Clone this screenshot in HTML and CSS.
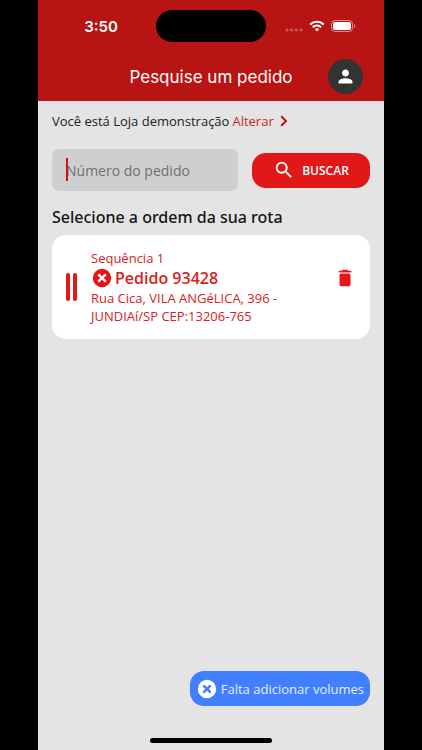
FILE: index.html
```html
<!DOCTYPE html>
<html lang="pt-BR">
<head>
  <meta charset="UTF-8" />
  <meta name="viewport" content="width=device-width, initial-scale=1.0"/>
  <title>Pesquise um pedido</title>
  <link rel="stylesheet" href="styles.css">
</head>
<body>

  <div class="phone">
    <header class="top">
      <!-- Status bar -->
      <div class="status-bar">
        <span class="time">3:50</span>
        <span class="island"></span>
        <div class="signals">
          <svg width="18" height="4" viewBox="0 0 18 4" fill="#fff" fill-opacity=".3">
            <circle cx="2" cy="2" r="1.6"/><circle cx="6.6" cy="2" r="1.6"/><circle cx="11.3" cy="2" r="1.6"/><circle cx="16" cy="2" r="1.6"/>
          </svg>
          <svg width="16" height="12" viewBox="0 0 16 12" fill="none" stroke="#fff" stroke-width="2.2">
            <path d="M1.2 4.5a9.8 9.8 0 0 1 13.6 0"/>
            <path d="M3.8 7.2a6 6 0 0 1 8.4 0"/>
            <path d="M8 11.6L5.8 9.3a3.2 3.2 0 0 1 4.4 0z" fill="#fff" stroke="none"/>
          </svg>
          <svg width="25" height="12" viewBox="0 0 25 12">
            <rect x=".5" y=".5" width="21" height="11" rx="3.5" fill="none" stroke="#fff" stroke-opacity=".5"/>
            <rect x="2" y="2" width="18" height="8" rx="2.2" fill="#fff"/>
            <path d="M23 4v4a2.2 2.2 0 0 0 0-4z" fill="#fff" fill-opacity=".5"/>
          </svg>
        </div>
      </div>

      <div class="title-bar">
        <h1>Pesquise um pedido</h1>
        <button class="avatar" type="button" aria-label="Perfil">
          <svg width="21" height="21" viewBox="0 0 24 24" fill="#fff"><path d="M12 12c2.2 0 4-1.8 4-4s-1.8-4-4-4-4 1.8-4 4 1.8 4 4 4zm0 2c-2.7 0-8 1.3-8 4v1c0 .6.4 1 1 1h14c.6 0 1-.4 1-1v-1c0-2.7-5.3-4-8-4z"/></svg>
        </button>
      </div>
    </header>

    <main class="content">
      <p class="store">
        Você está Loja demonstração
        <a href="#">Alterar
          <svg width="8" height="12" viewBox="0 0 8 12" fill="none" stroke="#b91515" stroke-width="2"><path d="M1.2 1.2L6 6l-4.8 4.8"/></svg>
        </a>
      </p>

      <form class="search">
        <div class="field">
          <input type="text" placeholder="Número do pedido" aria-label="Número do pedido">
          <span class="caret"></span>
        </div>
        <button class="search-btn" type="button">
          <svg width="22" height="22" viewBox="0 0 24 24" fill="#fff"><path d="M15.5 14h-.79l-.28-.27A6.47 6.47 0 0 0 16 9.5 6.5 6.5 0 1 0 9.5 16c1.61 0 3.09-.59 4.23-1.57l.27.28v.79l5 4.99L20.49 19l-4.99-5zm-6 0C7.01 14 5 11.99 5 9.5S7.01 5 9.5 5 14 7.01 14 9.5 11.99 14 9.5 14z"/></svg>
          BUSCAR
        </button>
      </form>

      <h2>Selecione a ordem da sua rota</h2>

      <article class="card">
        <div class="handle"><span></span><span></span></div>
        <div class="order">
          <p>Sequência 1</p>
          <h3>
            <svg width="22" height="22" viewBox="0 0 24 24"><circle cx="12" cy="12" r="10" fill="#e21717"/><path d="M8 8l8 8M16 8l-8 8" stroke="#fff" stroke-width="2.6"/></svg>
            Pedido 93428
          </h3>
          <p>Rua Cica, VILA ANGéLICA, 396 - JUNDIAí/SP CEP:13206-765</p>
        </div>
        <button class="delete" type="button" aria-label="Excluir pedido">
          <svg width="22" height="22" viewBox="0 0 24 24" fill="#e21717"><path d="M6 19c0 1.1.9 2 2 2h8c1.1 0 2-.9 2-2V9c0-1.1-.9-2-2-2H8c-1.1 0-2 .9-2 2v10zM18 4h-2.5l-.71-.71c-.18-.18-.44-.29-.7-.29H9.910c-.26 0-.52.11-.7.29L8.500 4H6c-.55 0-1 .45-1 1s.45 1 1 1h12c.55 0 1-.45 1-1s-.45-1-1-1z"/></svg>
        </button>
      </article>
    </main>

    <footer class="bottom">
      <button class="volumes-btn" type="button">
        <svg width="22" height="22" viewBox="0 0 24 24"><circle cx="12" cy="12" r="10" fill="#fff"/><path d="M8 8l8 8M16 8l-8 8" stroke="#4080ff" stroke-width="2.6"/></svg>
        Falta adicionar volumes
      </button>
      <span class="home-bar"></span>
    </footer>
  </div>

</body>
</html>
```

FILE: styles.css
```css
* {
  box-sizing: border-box;
}

body {
  margin: 0;
  padding: 0 38px;
  background: #000;
  font-family: 'Open Sans', 'Noto Sans', sans-serif;
  color: #222;
}

h1, h2, h3, p {
  margin: 0;
}

button {
  border: none;
  padding: 0;
  font-family: inherit;
  cursor: pointer;
}

svg {
  display: block;
  flex-shrink: 0;
}

.phone {
  min-height: 100vh;
  display: flex;
  flex-direction: column;
  background: #e4e4e4;
}

.top {
  background: #b91414;
  color: #fff;
}

/* Status bar */
.status-bar {
  display: grid;
  grid-template-columns: 1fr 110px 1fr;
  align-items: center;
  height: 52px;
}

.time {
  padding-left: 8px;
  text-align: center;
  font: 600 15px 'Inter', sans-serif;
}

.island {
  height: 32px;
  border-radius: 16px;
  background: #000;
}

.signals {
  display: flex;
  align-items: center;
  justify-content: flex-end;
  gap: 6px;
  padding-right: 28px;
}

.signals svg:first-child {
  margin-top: 8px;
}

/* Title */
.title-bar {
  display: grid;
  grid-template-columns: 1fr auto 1fr;
  align-items: center;
  padding: 7px 21px;
}

.title-bar h1 {
  grid-column: 2;
  font: 400 17px 'Inter', sans-serif;
}

.avatar {
  display: flex;
  align-items: center;
  justify-content: center;
  justify-self: end;
  width: 35px;
  height: 35px;
  border-radius: 50%;
  background: #333;
}

.content {
  flex: 1;
  padding: 10px 14px;
}

.store {
  display: flex;
  gap: 3px;
  font-size: 13px;
  line-height: 20px;
}

.store a {
  display: flex;
  align-items: center;
  gap: 6px;
  color: #c91f1f;
  text-decoration: none;
}

/* Search */
.search {
  display: flex;
  align-items: center;
  gap: 14px;
  margin-top: 18px;
}

.field {
  position: relative;
  flex: 1;
}

.field input {
  display: block;
  width: 100%;
  height: 42px;
  padding: 0 14px;
  border: none;
  border-radius: 7px;
  background: #cfcfcf;
  font-family: inherit;
  font-size: 14px;
}

.field input::placeholder {
  color: #707070;
}

.caret {
  position: absolute;
  top: 9px;
  left: 14px;
  width: 2px;
  height: 23px;
  background: #c91414;
}

.search-btn {
  display: flex;
  align-items: center;
  justify-content: center;
  gap: 7px;
  width: 118px;
  height: 35px;
  border-radius: 14px;
  background: #e21717;
  color: #fff;
  font-size: 12px;
  font-weight: 600;
}

h2 {
  margin-top: 14px;
  font-family: 'Noto Sans', sans-serif;
  font-size: 16px;
  font-weight: 500;
  line-height: 24px;
  color: #151515;
}

/* Order card */
.card {
  display: flex;
  align-items: center;
  margin-top: 6px;
  padding: 14px;
  border-radius: 14px;
  background: #fff;
  color: #d92020;
}

.handle {
  display: flex;
  gap: 3px;
  width: 25px;
}

.handle span {
  width: 4px;
  height: 28px;
  border-radius: 2px;
  background: #e21717;
}

.order {
  flex: 1;
}

.order p {
  max-width: 200px;
  font-size: 13px;
  line-height: 18px;
}

.order h3 {
  display: flex;
  align-items: center;
  gap: 2px;
  font-size: 16px;
  font-weight: 600;
  line-height: 22px;
}

.delete {
  align-self: flex-start;
  margin-top: 18px;
  background: none;
}

/* Bottom */
.bottom {
  display: flex;
  flex-direction: column;
  padding: 0 14px 7px;
}

.volumes-btn {
  display: flex;
  align-items: center;
  align-self: flex-end;
  gap: 3px;
  height: 35px;
  padding: 0 6px;
  border-radius: 14px;
  background: #4080ff;
  color: #e6eeff;
  font-size: 13px;
}

.home-bar {
  align-self: center;
  width: 122px;
  height: 5px;
  margin-top: 32px;
  border-radius: 3px;
  background: #000;
}
```
